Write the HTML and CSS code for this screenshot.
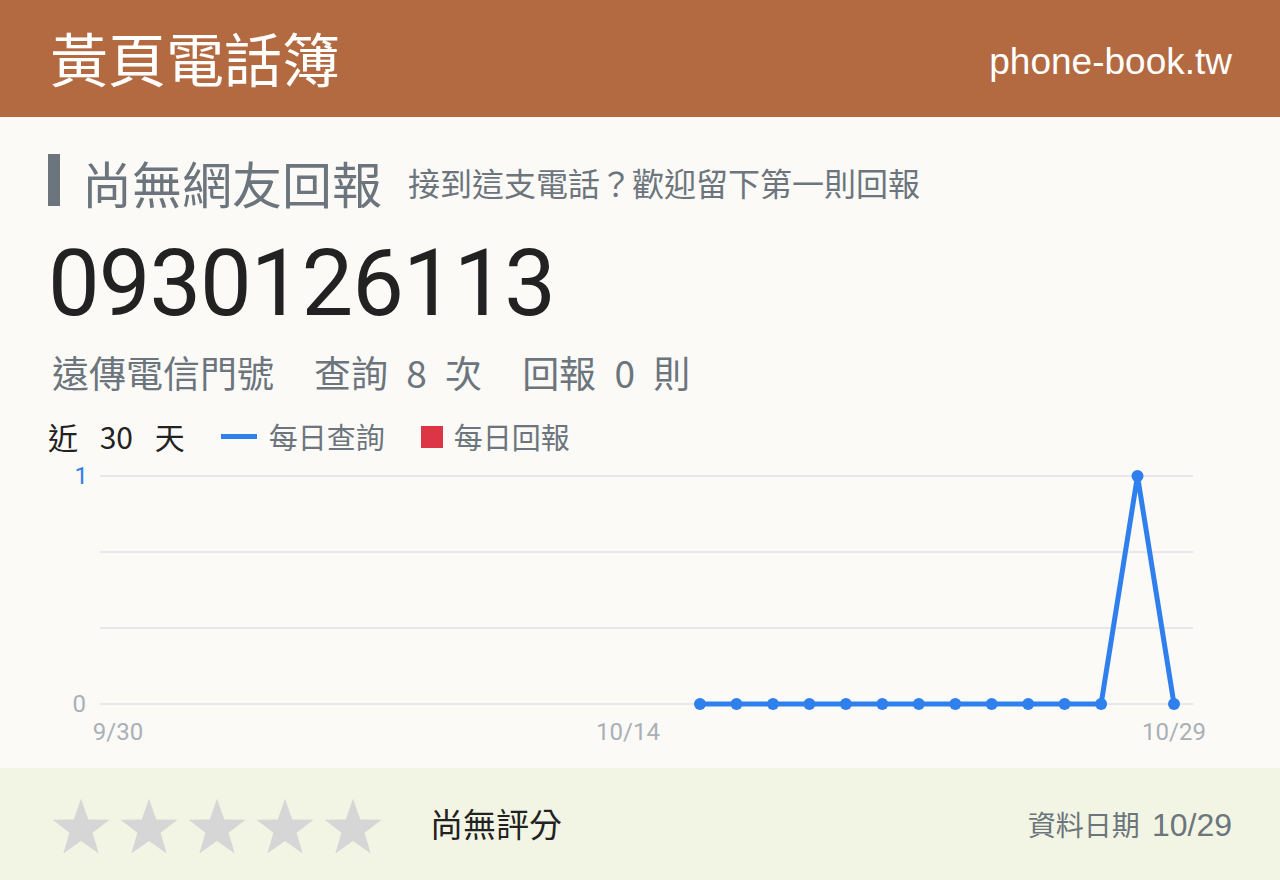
FILE: index.html
```html
<!doctype html>
<html lang="zh-Hant">
<head>
  <meta charset="utf-8">
  <title>0930126113 - 黃頁電話簿</title>
  <link rel="stylesheet" href="styles.css">
</head>
<body>

  <header class="topbar">
    <div class="brand">黃頁電話簿</div>
    <div class="site">phone-book.tw</div>
  </header>

  <section class="content">
    <div class="title-row">
      <span class="title-bar"></span>
      <h1 class="title">尚無網友回報</h1>
      <span class="subtitle">接到這支電話？歡迎留下第一則回報</span>
    </div>

    <div class="number">0930126113</div>

    <div class="stats">
      <span>遠傳電信門號</span>
      <span>查詢 8 次</span>
      <span>回報 0 則</span>
    </div>

    <div class="legend">
      <span class="range">近 30 天</span>
      <span class="key"><i class="key-line"></i>每日查詢</span>
      <span class="key"><i class="key-box"></i>每日回報</span>
    </div>

    <svg class="chart" width="1184" height="300" viewBox="0 0 1184 300">
      <g class="grid">
        <line x1="52" y1="16" x2="1145" y2="16"></line>
        <line x1="52" y1="92" x2="1145" y2="92"></line>
        <line x1="52" y1="168" x2="1145" y2="168"></line>
        <line x1="52" y1="244" x2="1145" y2="244"></line>
      </g>
      <text class="ylab one" x="40" y="24" text-anchor="end">1</text>
      <text class="ylab" x="38" y="252" text-anchor="end">0</text>
      <text class="xlab" x="70" y="280" text-anchor="middle">9/30</text>
      <text class="xlab" x="580" y="280" text-anchor="middle">10/14</text>
      <text class="xlab" x="1126" y="280" text-anchor="middle">10/29</text>

      <!-- 每日查詢: 10/16 ~ 10/29 -->
      <polyline class="series" points="652,244 688.5,244 725,244 761.4,244 797.9,244 834.3,244 870.8,244 907.3,244 943.7,244 980.2,244 1016.6,244 1053.1,244 1089.5,16 1126,244"></polyline>
      <g class="dots">
        <circle cx="652" cy="244" r="6"></circle>
        <circle cx="688.5" cy="244" r="6"></circle>
        <circle cx="725" cy="244" r="6"></circle>
        <circle cx="761.4" cy="244" r="6"></circle>
        <circle cx="797.9" cy="244" r="6"></circle>
        <circle cx="834.3" cy="244" r="6"></circle>
        <circle cx="870.8" cy="244" r="6"></circle>
        <circle cx="907.3" cy="244" r="6"></circle>
        <circle cx="943.7" cy="244" r="6"></circle>
        <circle cx="980.2" cy="244" r="6"></circle>
        <circle cx="1016.6" cy="244" r="6"></circle>
        <circle cx="1053.1" cy="244" r="6"></circle>
        <circle cx="1089.5" cy="16" r="6"></circle>
        <circle cx="1126" cy="244" r="6"></circle>
      </g>
    </svg>
  </section>

  <footer class="rating">
    <div class="stars">
      <svg viewBox="0 0 24 24"><path d="M12 1.5l3 8.6 8.8.1-7 5.4 2.5 8.6L12 19l-7.3 5.2 2.5-8.6-7-5.4 8.8-.1z"/></svg>
      <svg viewBox="0 0 24 24"><path d="M12 1.5l3 8.6 8.8.1-7 5.4 2.5 8.6L12 19l-7.3 5.2 2.5-8.6-7-5.4 8.8-.1z"/></svg>
      <svg viewBox="0 0 24 24"><path d="M12 1.5l3 8.6 8.8.1-7 5.4 2.5 8.6L12 19l-7.3 5.2 2.5-8.6-7-5.4 8.8-.1z"/></svg>
      <svg viewBox="0 0 24 24"><path d="M12 1.5l3 8.6 8.8.1-7 5.4 2.5 8.6L12 19l-7.3 5.2 2.5-8.6-7-5.4 8.8-.1z"/></svg>
      <svg viewBox="0 0 24 24"><path d="M12 1.5l3 8.6 8.8.1-7 5.4 2.5 8.6L12 19l-7.3 5.2 2.5-8.6-7-5.4 8.8-.1z"/></svg>
    </div>
    <span class="no-score">尚無評分</span>
    <span class="updated">資料日期 <b>10/29</b></span>
  </footer>

</body>
</html>
```

FILE: styles.css
```css
html, body {
  margin: 0;
  padding: 0;
}
body {
  width: 1280px;
  height: 880px;
  overflow: hidden;
  background: #fbfaf6;
  font-family: "Noto Sans CJK TC", "Noto Sans", sans-serif;
  color: #222;
}

.topbar {
  height: 117px;
  background: #b46a41;
  color: #fff;
  display: flex;
  align-items: center;
  justify-content: space-between;
  padding: 0 48px 0 50px;
}
.brand {
  font-size: 58px;
  line-height: 1;
  margin-top: -4px;
}
.site {
  font-family: "Liberation Sans", Arial, sans-serif;
  font-size: 37px;
  margin-top: 6px;
}

.content {
  padding: 36px 48px 0;
  height: 615px;
}

.title-row {
  display: flex;
  align-items: center;
  color: #6c757d;
}
.title-bar {
  width: 12px;
  height: 52px;
  background: #6c757d;
  margin-right: 22px;
}
.title {
  margin: 0;
  font-size: 50px;
  font-weight: 400;
  line-height: 1;
  margin-top: 4px;
}
.subtitle {
  font-size: 32px;
  margin-left: 26px;
  margin-top: 4px;
}

.number {
  font-family: Roboto, "Liberation Sans", sans-serif;
  font-size: 92px;
  line-height: 1;
  color: #222;
  margin-top: 31px;
  letter-spacing: -1px;
}

.stats {
  display: flex;
  gap: 40px;
  font-size: 37px;
  color: #6c757d;
  margin: 15px 0 0 4px;
  word-spacing: 10px;
}

.legend {
  display: flex;
  align-items: center;
  margin-top: 18px;
  font-size: 29px;
}
.range {
  color: #222;
  font-size: 30px;
  word-spacing: 15px;
  margin-right: 36px;
}
.range, .key {
  line-height: 1.3;
}
.key {
  display: flex;
  align-items: center;
  color: #6c757d;
  margin-right: 36px;
}
.key-line {
  width: 36px;
  height: 5px;
  background: #2f80ed;
  margin-right: 12px;
}
.key-box {
  width: 22px;
  height: 22px;
  background: #dc3545;
  margin-right: 11px;
}

.chart {
  display: block;
  margin-top: 4px;
}
.grid line {
  stroke: #e6e8ec;
  stroke-width: 2;
}
.ylab, .xlab {
  font-family: Roboto, "Liberation Sans", sans-serif;
  font-size: 24px;
  fill: #a9b0b6;
}
.ylab.one {
  fill: #2f80ed;
}
.series {
  fill: none;
  stroke: #2f80ed;
  stroke-width: 5;
  stroke-linejoin: round;
}
.dots circle {
  fill: #2f80ed;
}

.rating {
  height: 112px;
  background: #f2f5e3;
  display: flex;
  align-items: center;
  padding: 0 48px 0 52px;
}
.stars {
  display: flex;
  gap: 10px;
}
.stars svg {
  width: 58px;
  height: 58px;
  fill: #d6d6d6;
}
.no-score {
  font-size: 33px;
  margin-left: 48px;
  margin-top: -2px;
  color: #222;
}
.updated {
  margin-left: auto;
  font-size: 28px;
  color: #6c757d;
}
.updated b {
  font-family: "Liberation Sans", Arial, sans-serif;
  font-weight: 400;
  font-size: 32px;
  margin-left: 6px;
}
```
